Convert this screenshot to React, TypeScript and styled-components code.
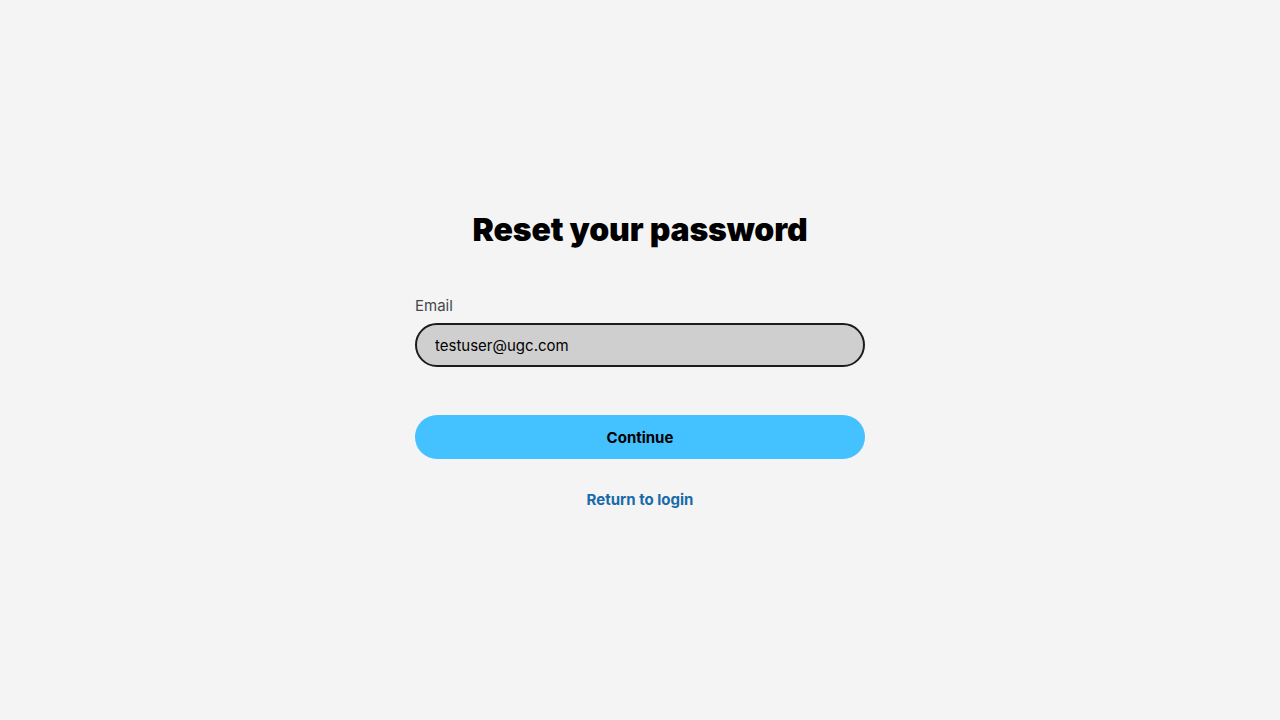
import React from 'react';
import styled, { createGlobalStyle } from 'styled-components';

const GlobalStyle = createGlobalStyle`
  html, body {
    margin: 0;
    padding: 0;
    background: #f4f4f4;
    font-family: Inter, "Noto Sans", sans-serif;
  }
`;

const Page = styled.main`
  min-height: 720px;
  display: flex;
  justify-content: center;
  padding-top: 210px;
  box-sizing: border-box;
`;

const Form = styled.form`
  width: 450px;
  display: flex;
  flex-direction: column;
`;

const Title = styled.h1`
  margin: 0 0 46px;
  text-align: center;
  font-size: 32px;
  line-height: 40px;
  font-weight: 900;
  letter-spacing: -0.15px;
  color: #000;
`;

const Label = styled.label`
  font-size: 15px;
  line-height: 20px;
  font-weight: 400;
  color: #474747;
  margin-bottom: 7px;
`;

const Input = styled.input`
  height: 44px;
  box-sizing: border-box;
  border: 2px solid #1c1c1c;
  border-radius: 22px;
  background: #cfcfcf;
  padding: 0 18px;
  font-family: inherit;
  font-size: 15px;
  color: #000;
  outline: none;
`;

const Button = styled.button`
  margin-top: 48px;
  height: 44px;
  border: none;
  border-radius: 22px;
  background: #44c1ff;
  font-family: inherit;
  font-size: 15px;
  font-weight: 700;
  color: #000;
  cursor: pointer;
`;

const Link = styled.a`
  margin-top: 31px;
  align-self: center;
  font-size: 15px;
  line-height: 20px;
  font-weight: 700;
  color: #186aa8;
  text-decoration: none;
`;

export default function App() {
  return (
    <>
      <GlobalStyle />
      <Page>
        <Form onSubmit={(e) => e.preventDefault()}>
          <Title>Reset your password</Title>
          <Label htmlFor="email">Email</Label>
          <Input id="email" type="email" defaultValue="testuser@ugc.com" />
          <Button type="submit">Continue</Button>
          <Link href="#">Return to login</Link>
        </Form>
      </Page>
    </>
  );
}
